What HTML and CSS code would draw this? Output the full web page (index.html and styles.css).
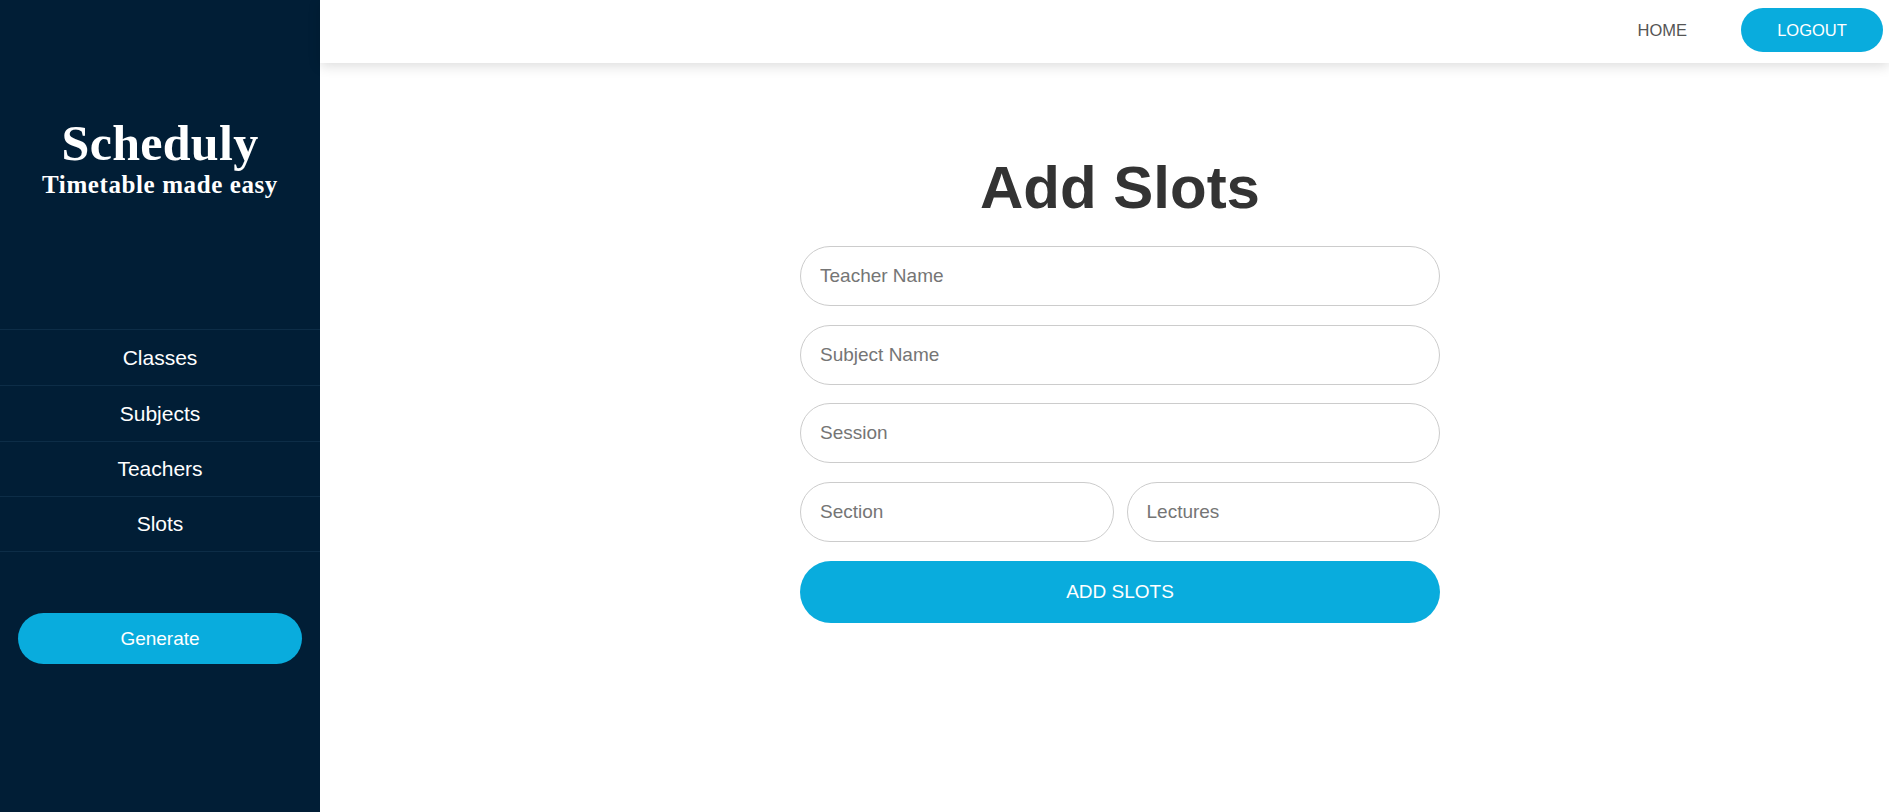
FILE: index.html
```html
<!DOCTYPE html>
<html lang="en">
<head>
<meta charset="utf-8">
<title>Scheduly - Add Slots</title>
<link rel="stylesheet" href="styles.css">
</head>
<body>
<div class="app">
  <aside class="sidebar">
    <div class="brand">
      <div class="brand-title">Scheduly</div>
      <div class="brand-sub">Timetable made easy</div>
    </div>
    <nav class="side-nav">
      <a class="side-link" href="#">Classes</a>
      <a class="side-link" href="#">Subjects</a>
      <a class="side-link" href="#">Teachers</a>
      <a class="side-link" href="#">Slots</a>
    </nav>
    <div class="gen-wrap">
      <button class="btn-generate" type="button">Generate</button>
    </div>
  </aside>
  <div class="content">
    <header class="topbar">
      <a class="top-link" href="#">HOME</a>
      <button class="btn-logout" type="button">LOGOUT</button>
    </header>
    <main class="main">
      <form class="slot-form">
        <h1 class="form-title">Add Slots</h1>
        <input class="field" type="text" placeholder="Teacher Name">
        <input class="field" type="text" placeholder="Subject Name">
        <input class="field" type="text" placeholder="Session">
        <div class="field-row">
          <input class="field" type="text" placeholder="Section">
          <input class="field" type="text" placeholder="Lectures">
        </div>
        <button class="btn-submit" type="button">ADD SLOTS</button>
      </form>
    </main>
  </div>
</div>
</body>
</html>
```

FILE: styles.css
```css
* { box-sizing: border-box; }
html, body { margin: 0; padding: 0; height: 100%; }
body {
  font-family: "Liberation Sans", Arial, sans-serif;
  background: #ffffff;
  overflow: hidden;
}
.app {
  display: flex;
  height: 812px;
}
.sidebar {
  width: 320px;
  flex: 0 0 320px;
  background: #011e36;
  color: #ffffff;
  display: flex;
  flex-direction: column;
}
.brand {
  height: 329px;
  padding-top: 118px;
  text-align: center;
  font-family: "Liberation Serif", "Times New Roman", serif;
  font-weight: bold;
}
.brand-title {
  font-size: 50px;
  line-height: 50px;
  letter-spacing: 0.3px;
}
.brand-sub {
  font-size: 25px;
  line-height: 25px;
  margin-top: 4px;
  letter-spacing: 0.6px;
}
.side-nav {
  display: flex;
  flex-direction: column;
  border-bottom: 1px solid #0d2d47;
}
.side-link {
  display: flex;
  align-items: center;
  justify-content: center;
  height: 56px;
  border-top: 1px solid #0d2d47;
  color: #ffffff;
  text-decoration: none;
  font-size: 21px;
}
.side-link:nth-child(3), .side-link:nth-child(4) { height: 55px; }
.gen-wrap {
  padding: 61px 18px 0;
}
.btn-generate {
  width: 100%;
  height: 51px;
  border: none;
  border-radius: 26px;
  background: #09acdd;
  color: #ffffff;
  font-family: "Liberation Sans", Arial, sans-serif;
  font-size: 19px;
}
.content {
  flex: 1;
  display: flex;
  flex-direction: column;
}
.topbar {
  height: 63px;
  display: flex;
  align-items: center;
  justify-content: flex-end;
  padding-right: 6px;
  background: #ffffff;
  box-shadow: 0 3px 12px rgba(0, 0, 0, 0.14);
  position: relative;
  z-index: 1;
}
.top-link {
  color: #555555;
  text-decoration: none;
  font-size: 16.5px;
  margin-right: 54px;
  margin-top: -2px;
}
.btn-logout {
  width: 142px;
  height: 44px;
  margin-top: -3px;
  border: none;
  border-radius: 22px;
  background: #09acdd;
  color: #ffffff;
  font-family: "Liberation Sans", Arial, sans-serif;
  font-size: 16.5px;
}
.main {
  flex: 1;
  padding-left: 31px;
  display: flex;
  justify-content: center;
}
.slot-form {
  width: 640px;
  display: flex;
  flex-direction: column;
  gap: 18.7px;
}
.form-title {
  margin: 90px 0 5.3px;
  text-align: center;
  font-size: 60px;
  line-height: 69px;
  font-weight: bold;
  color: #333333;
}
.field {
  width: 100%;
  height: 60px;
  border: 1px solid #cccccc;
  border-radius: 30px;
  padding: 0 19px;
  font-family: "Liberation Sans", Arial, sans-serif;
  font-size: 19px;
  color: #333333;
  background: #ffffff;
  outline: none;
}
.field::placeholder { color: #757575; }
.field-row {
  display: grid;
  grid-template-columns: 1fr 1fr;
  gap: 13px;
}
.btn-submit {
  height: 62px;
  border: none;
  border-radius: 31px;
  background: #09acdd;
  color: #ffffff;
  font-family: "Liberation Sans", Arial, sans-serif;
  font-size: 19px;
}
```
